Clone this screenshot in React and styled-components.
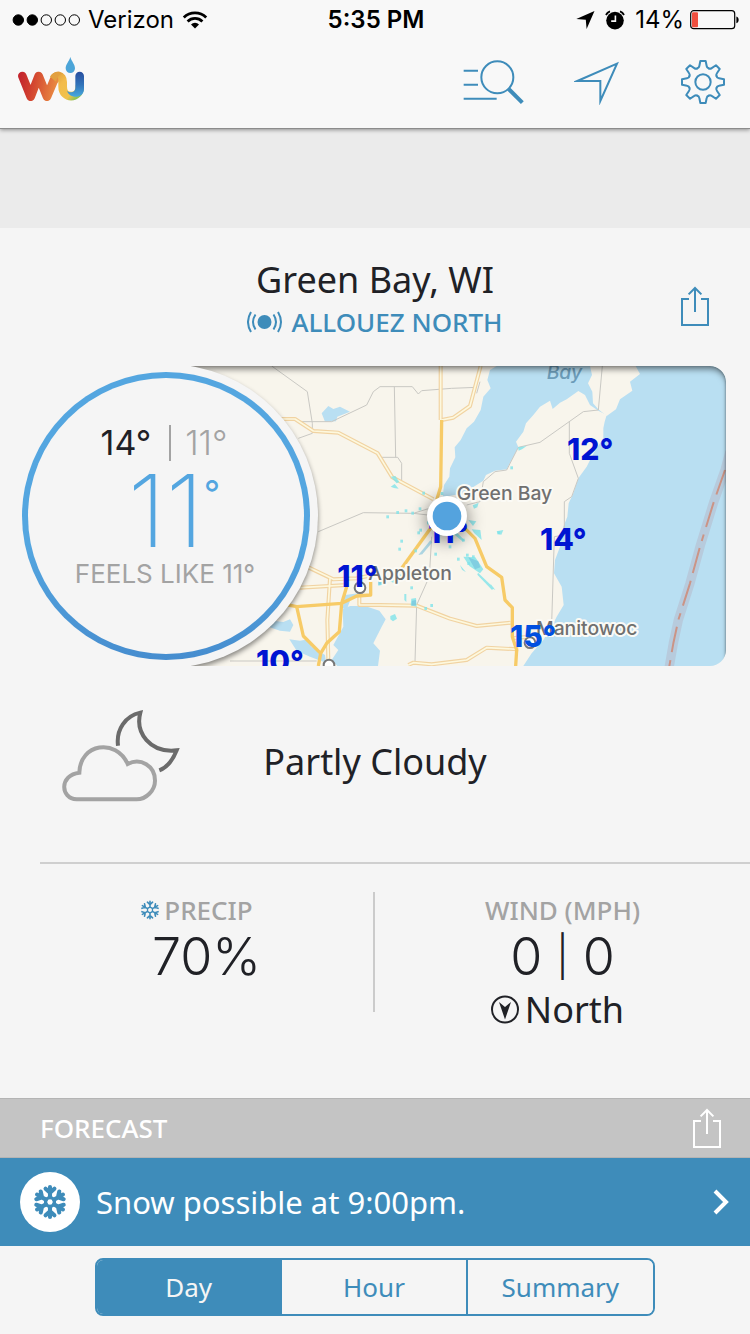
import React, { useState } from "react";
import styled, { createGlobalStyle } from "styled-components";

const GlobalStyle = createGlobalStyle`
  * {
    box-sizing: border-box;
  }
  body {
    margin: 0;
    background: #f5f5f5;
    color: #202126;
    font-family: "Noto Sans", "Open Sans", sans-serif;
  }
  h1, h2, p, dl, dt, dd {
    margin: 0;
    font-weight: 400;
  }
  button {
    margin: 0;
    padding: 0;
    border: 0;
    background: none;
    font: inherit;
    color: inherit;
    cursor: pointer;
  }
  svg {
    display: block;
  }
`;

const Header = styled.header`
  position: relative;
  background: #f8f8f8;
  border-bottom: 1px solid #8c8c8c;
  box-shadow: 0 1px 4px rgba(0, 0, 0, 0.4);
`;

const StatusBar = styled.div`
  display: grid;
  grid-template-columns: 1fr auto 1fr;
  align-items: center;
  height: 40px;
  padding: 0 10px 0 12px;
  font-family: Inter, sans-serif;
  font-size: 24px;
  line-height: 28px;
  color: #000000;
`;

const StatusGroup = styled.div`
  display: flex;
  align-items: center;
  justify-content: ${({ $end }) => ($end ? "flex-end" : "flex-start")};
  gap: ${({ $end }) => ($end ? "10px" : "8px")};
`;

const Battery = styled.div`
  display: flex;
  align-items: center;
  gap: 6px;
`;

const Clock = styled.time`
  font-weight: 600;
`;

const Toolbar = styled.div`
  display: flex;
  align-items: center;
  justify-content: space-between;
  height: 88px;
  padding: 0 24px 0 16px;
`;

const Actions = styled.nav`
  display: flex;
  align-items: center;
  gap: 50px;
  padding-bottom: 4px;
`;

const IconButton = styled.button`
  display: flex;
  color: ${({ $color }) => $color || "#3e8cba"};
`;

const Banner = styled.div`
  height: 99px;
  background: #ebebeb;
`;

const Place = styled.section`
  display: grid;
  grid-template-columns: 1fr auto 1fr;
  align-items: center;
  padding: 30px 40px 26px;
  text-align: center;
`;

const PlaceText = styled.div`
  grid-column: 2;
`;

const PlaceShare = styled.div`
  display: flex;
  justify-content: flex-end;
  padding-top: 14px;
`;

const City = styled.h1`
  font-size: 36px;
  line-height: 44px;
`;

const Station = styled.a`
  display: flex;
  align-items: center;
  justify-content: center;
  gap: 8px;
  margin-top: 2px;
  font-size: 26px;
  font-weight: 500;
  line-height: 36px;
  color: #3e8cba;
  text-decoration: none;
`;

const Current = styled.section`
  position: relative;
  padding: 0 24px 0 166px;
`;

const MapFrame = styled.div`
  position: relative;
  height: 300px;
  overflow: hidden;
  border-radius: 0 16px 16px 0;

  svg {
    width: 100%;
    height: 100%;
  }
`;

const MapShade = styled.div`
  position: absolute;
  inset: 0 0 -10px -20px;
  border-radius: 0 16px 16px 0;
  box-shadow: inset 0 5px 6px -2px rgba(0, 0, 0, 0.5),
    inset -1px 0 2px rgba(0, 0, 0, 0.2);
`;

const Halo = styled.div`
  position: absolute;
  top: -2px;
  left: -152px;
  width: 304px;
  height: 304px;
  border-radius: 50%;
  background: #f5f5f5;
  box-shadow: 0 3px 5px rgba(0, 0, 0, 0.45);
`;

const Dial = styled.div`
  position: absolute;
  top: 6px;
  left: 22px;
  display: flex;
  flex-direction: column;
  align-items: center;
  width: 288px;
  height: 288px;
  padding-top: 46px;
  border: 6px solid transparent;
  border-radius: 50%;
  background: linear-gradient(#f5f5f5, #f5f5f5) padding-box,
    linear-gradient(#54a6e0 60%, #468dcf) border-box;
  font-family: Inter, sans-serif;
  color: #a3a3a3;
`;

const Range = styled.div`
  display: flex;
  align-items: center;
  gap: 14px;
  padding-right: 4px;
  font-size: 34px;
  font-weight: 300;
  line-height: 38px;
`;

const High = styled.span`
  padding-right: 4px;
  font-weight: 400;
  color: #202126;
`;

const RangeRule = styled.span`
  width: 2px;
  height: 36px;
  background: #a3a3a3;
`;

const Temperature = styled.div`
  display: flex;
  padding-left: 16px;
  font-size: 100px;
  font-weight: 200;
  line-height: 98px;
  color: #54a6e0;
`;

const Degree = styled.span`
  font-size: 36px;
  font-weight: 400;
  line-height: 62px;
`;

const FeelsLike = styled.p`
  padding-right: 2px;
  font-size: 26px;
  line-height: 28px;
`;

const Conditions = styled.section`
  display: grid;
  grid-template-columns: 1fr auto 1fr;
  align-items: center;
  padding: 44px 62px 52px;
`;

const Summary = styled.p`
  padding-top: 4px;
  font-size: 36px;
  line-height: 44px;
`;

const Rule = styled.hr`
  height: 2px;
  margin: 0 0 0 40px;
  border: 0;
  background: #cfcfcf;
`;

const Stats = styled.dl`
  display: grid;
  grid-template-columns: 1fr 1fr;
  padding: 28px 0 66px;
`;

const Stat = styled.div`
  display: flex;
  flex-direction: column;
  align-items: center;
  align-self: start;
  min-height: 120px;
  padding-left: ${({ $ruled }) => ($ruled ? "40px" : "0")};
  border-right: ${({ $ruled }) => ($ruled ? "2px solid #cbcbcb" : "0")};

  svg {
    flex: none;
  }
`;

const StatLabel = styled.dt`
  display: flex;
  align-items: center;
  gap: 4px;
  padding-right: ${({ $icon }) => ($icon ? "20px" : "0")};
  font-size: 26px;
  font-weight: 500;
  line-height: 36px;
  color: #a3a3a3;

  svg {
    color: #3e8cba;
  }
`;

const StatValue = styled.dd`
  display: flex;
  align-items: center;
  gap: 14px;
  font-family: Inter, sans-serif;
  font-size: 52px;
  font-weight: 300;
  line-height: 58px;
`;

const Bar = styled.span`
  font-size: 40px;
`;

const Direction = styled.dd`
  display: flex;
  align-items: center;
  gap: 6px;
  margin-top: 2px;
  padding-right: 10px;
  font-size: 36px;
  line-height: 44px;
`;

const ForecastBar = styled.div`
  display: flex;
  align-items: center;
  justify-content: space-between;
  height: 60px;
  padding: 0 28px 0 40px;
  background: #c4c4c4;
  border: solid #b4b4b4;
  border-width: 1px 0;
  color: #ffffff;
`;

const ForecastTitle = styled.h2`
  font-size: 26px;
  font-weight: 500;
  line-height: 36px;
`;

const Alert = styled.button`
  display: flex;
  align-items: center;
  gap: 16px;
  width: 100%;
  height: 88px;
  padding: 0 20px;
  background: #3e8cba;
  color: #ffffff;
  font-size: 31px;
  line-height: 40px;
`;

const AlertBadge = styled.span`
  display: flex;
  align-items: center;
  justify-content: center;
  width: 60px;
  height: 60px;
  border-radius: 50%;
  background: #ffffff;
  color: #3e8cba;
`;

const AlertText = styled.span`
  flex: 1;
  text-align: left;
`;

const Tabs = styled.div`
  display: grid;
  grid-template-columns: repeat(3, 1fr);
  margin: 12px 95px 18px;
  border: 2px solid #3e8cba;
  border-radius: 8px;
  overflow: hidden;
`;

const Tab = styled.button`
  height: 54px;
  font-size: 26px;
  line-height: 36px;
  background: ${({ $active }) => ($active ? "#3e8cba" : "#f5f5f5")};
  color: ${({ $active }) => ($active ? "#f5f5f5" : "#3e8cba")};

  &:not(:last-child) {
    border-right: 2px solid #3e8cba;
  }
`;

const SignalIcon = () => (
  <svg width="68" height="12" viewBox="0 0 68 12" stroke="#000">
    <circle cx="6.3" cy="6" r="5.2" />
    <circle cx="20.3" cy="6" r="5.2" />
    <circle cx="34.3" cy="6" r="5.2" fill="none" />
    <circle cx="48.3" cy="6" r="5.2" fill="none" />
    <circle cx="62.3" cy="6" r="5.2" fill="none" />
  </svg>
);

const WifiIcon = () => (
  <svg width="26" height="20" viewBox="0 0 26 20" fill="none" stroke="#000" strokeWidth="2.8">
    <path d="M1.8 7.4a16 16 0 0 1 22.4 0" />
    <path d="M5.6 11.4a10.5 10.5 0 0 1 14.8 0" />
    <path d="M13 18.6l-4-4.2a5.8 5.8 0 0 1 8 0z" fill="#000" stroke="none" />
  </svg>
);

const LocationIcon = () => (
  <svg width="19" height="18" viewBox="0 0 19 18">
    <path d="M18.5 0L10.6 18 9.8 8.8 0.3 8z" />
  </svg>
);

const AlarmIcon = () => (
  <svg width="20" height="20" viewBox="0 0 20 20" fill="none">
    <circle cx="10" cy="10.6" r="8.8" fill="#000" />
    <path d="M10.4 5.5v5.6H6.2" stroke="#f8f8f8" strokeWidth="1.6" />
    <path d="M1 5A7 7 0 0 1 5 1.4M19 5a7 7 0 0 0-4-3.6" stroke="#000" strokeWidth="1.8" />
  </svg>
);

const BatteryIcon = () => (
  <svg width="50" height="20" viewBox="0 0 50 20">
    <rect x="0.7" y="0.7" width="44" height="18" rx="3" fill="none" stroke="#000" strokeWidth="1.2" />
    <rect x="2" y="2.2" width="6" height="15" rx="1" fill="#ef4f3f" />
    <path d="M46.4 6.4c3 .6 3 6 0 6.8z" />
  </svg>
);

const Logo = () => (
  <svg width="70" height="56" viewBox="48 168 210 168" fill="none" strokeLinecap="round" strokeLinejoin="round" role="img" aria-label="Weather Underground">
    <defs>
      <linearGradient id="warm" gradientUnits="userSpaceOnUse" x1="60" y1="240" x2="175" y2="260">
        <stop offset="0" stopColor="#c4262e" />
        <stop offset="0.3" stopColor="#d1402f" />
        <stop offset="1" stopColor="#eb8f43" />
      </linearGradient>
      <linearGradient id="sun" gradientUnits="userSpaceOnUse" x1="160" y1="220" x2="240" y2="300">
        <stop offset="0" stopColor="#dd9a3b" />
        <stop offset="0.35" stopColor="#f3bc4b" />
        <stop offset="0.72" stopColor="#f0c24c" />
        <stop offset="0.9" stopColor="#8fc253" />
      </linearGradient>
      <linearGradient id="rain" gradientUnits="userSpaceOnUse" x1="0" y1="216" x2="0" y2="292">
        <stop offset="0" stopColor="#284f9f" />
        <stop offset="0.5" stopColor="#3274ba" />
        <stop offset="1" stopColor="#49abdf" />
      </linearGradient>
    </defs>
    <path d="M163 240C166 222 188 224 188 246v14c0 38 51 38 51 0" stroke="url(#sun)" strokeWidth="26" />
    <path d="M67 228l25 62 24-62 25 62 21-50" stroke="url(#warm)" strokeWidth="26" />
    <path d="M150 230c6-14 26-18 38-9-14 2-16 14-20 24z" fill="#e2a03f" />
    <path d="M226 228a13 13 0 0 1 26 0v38c0 14-9 23-22 24-14 0-25-5-29-18 10 9 25 5 25-8z" fill="url(#rain)" />
    <path d="M211 171c4 14 14 22 14 34a14 14 0 0 1-28 0c0-12 10-20 14-34z" fill="#4ca5d8" />
  </svg>
);

const SearchListIcon = () => (
  <svg width="62" height="46" viewBox="262 177 186 138" fill="none" stroke="currentColor" strokeWidth="6">
    <circle cx="368" cy="232" r="48" />
    <path d="M267 212h43M267 254h43M267 296h99" />
    <path d="M402 267l41 41" strokeWidth="12" />
  </svg>
);

const NavigateIcon = () => (
  <svg width="56" height="46" viewBox="596 178 168 138" fill="none" stroke="currentColor" strokeWidth="6">
    <path d="M725 192L606 244h69v60z" strokeMiterlimit="8" />
  </svg>
);

const GearIcon = () => (
  <svg width="46" height="46" viewBox="-69 -69 138 138" fill="none" stroke="currentColor" strokeWidth="6" strokeLinejoin="round" strokeLinecap="round">
    <circle r="23" />
    {[0, 45, 90, 135, 180, 225, 270, 315].map((angle) => (
      <path key={angle} d="M-17 -41Q-12 -42 -11 -48L-8 -63H8L11 -48Q12 -42 17 -41" transform={`rotate(${angle})`} />
    ))}
  </svg>
);

const ShareIcon = () => (
  <svg width="30" height="40" viewBox="0 0 30 40" fill="none" stroke="currentColor" strokeWidth="2">
    <path d="M9 13H2v26h26V13h-7" />
    <path d="M15 26V2M8.6 8.4L15 2l6.4 6.4" />
  </svg>
);

const BroadcastIcon = () => (
  <svg width="36" height="22" viewBox="0 0 36 22" fill="none" stroke="currentColor" strokeWidth="2">
    <circle cx="17.5" cy="11" r="7" fill="currentColor" stroke="none" />
    <path d="M8.5 3.500q-5 7.500 0 15M4 1q-6 10 0 20M26.500 3.500q5 7.500 0 15M31 1q6 10 0 20" />
  </svg>
);

const Snowflake = ({ size, weight }) => (
  <svg width={size} height={size} viewBox="-50 -50 100 100" fill="none" stroke="currentColor" strokeWidth={weight} strokeLinecap="round">
    {[0, 60, 120, 180, 240, 300].map((angle) => (
      <path key={angle} d="M0 -14V-44M-13 -39L0 -27L13 -39" transform={`rotate(${angle})`} />
    ))}
    <circle r="13" strokeWidth={weight - 2} />
  </svg>
);

const CloudMoonIcon = () => (
  <svg width="120" height="100" viewBox="66 60 360 300" fill="none" strokeWidth="12">
    <path d="M234 167C228 118 256 78 301 68C285 128 330 190 410 181C398 212 382 232 358 241" stroke="#6b6b6b" />
    <path d="M110 328C60 326 58 254 118 248C120 160 228 144 263 222C302 202 345 228 345 272C345 302 318 328 290 328Z" stroke="#a3a3a3" />
  </svg>
);

const CompassIcon = () => (
  <svg width="28" height="30" viewBox="0 0 28 30">
    <circle cx="14" cy="14.5" r="13" fill="none" stroke="currentColor" strokeWidth="2" />
    <path d="M14 24.500L8 7l6 5 6-5z" fill="currentColor" />
  </svg>
);

const ChevronIcon = () => (
  <svg width="18" height="28" viewBox="0 0 18 28" fill="none" stroke="currentColor" strokeWidth="4">
    <path d="M3 3l11 11L3 25" />
  </svg>
);

const minorRoads = [
  "M65 18L172 95L187 190V220L145 235",
  "M155 185H245L350 135L370 95L390 80H487L505 102L515 92L605 85L680 82",
  "M433 80L437 292M395 292H443L455 310V365",
  "M205 515L340 458L490 460L545 443M490 460L560 468",
  "M545 530L538 650L500 735L495 905",
  "M650 435L690 425L700 365L735 335L770 330L805 262L870 247L1000 155L1045 150L1057 18",
  "M958 185V280L985 355L965 410L943 425V525L913 530L905 790",
  "M-60 903H200M680 100L690 65",
];

const roads = [
  "M60 177H135L190 213L265 218L383 280L427 352L550 418",
  "M572 18V180M692 18L660 138L610 173L575 180",
  "M150 610L250 658L320 655L355 648M150 683L290 675",
  "M240 655L232 780L235 900",
  "M328 710V735H390L500 737L600 776L680 798L782 788",
  "M475 915L490 908L545 913L650 900L710 863L805 868M785 835L840 830",
];

const highways = [
  "M575 180L572 380L560 420",
  "M545 500L455 625",
  "M645 505L675 535L710 620L755 652L765 720L787 743V830L800 870L797 918",
  "M100 732L140 740L275 730L320 708L362 705V665",
  "M140 740L160 828L212 880L230 850L268 815L275 730L290 680M212 880L205 918",
];

const temperatures = [
  { x: 262, y: 681, value: 11 },
  { x: 18, y: 936, value: 10 },
  { x: 534, y: 549, value: 11 },
  { x: 951, y: 300, value: 12 },
  { x: 870, y: 570, value: 14 },
  { x: 780, y: 861, value: 15, fill: "#004fe0" },
];

const specks = [
  [413, 470], [443, 457], [468, 452], [488, 459], [510, 446], [521, 399], [535, 488], [512, 510], [506, 518],
  [455, 543], [449, 567], [497, 572], [557, 582], [576, 400], [625, 597], [640, 475], [652, 585], [670, 590],
  [485, 683], [527, 745], [545, 736], [746, 518], [785, 323], [656, 610], [600, 560], [640, 540],
];

const MapLabel = styled.text`
  font-family: Inter, sans-serif;
  font-size: 58px;
  font-weight: 500;
  fill: #707070;
  stroke: #fbfaf5;
  stroke-width: 12px;
  stroke-linejoin: round;
  paint-order: stroke;
`;

const WaterLabel = styled(MapLabel)`
  font-style: italic;
  fill: #6c9cb8;
  stroke: none;
`;

const MapTemp = styled.text`
  font-family: Inter, sans-serif;
  font-size: 90px;
  font-weight: 800;
`;

const RadarMap = () => (
  <svg viewBox="-252 18 1680 900" preserveAspectRatio="xMinYMid slice" fill="none" strokeLinejoin="round">
    <defs>
      <filter id="glow" x="-50%" y="-50%" width="200%" height="200%">
        <feGaussianBlur stdDeviation="24" />
      </filter>
    </defs>
    <rect x="-252" y="18" width="2400" height="900" fill="#f8f5ec" />
    <g fill="#b9dff2">
      <path d="M740 18L720 30L712 60L722 85L700 110L692 150L672 185L650 205L632 240L614 262L616 292L600 325L598 350L582 375L578 412L640 400L700 362L708 345L735 332L770 328L790 290L805 262L798 245L820 215L828 190L850 165L870 140L900 122L908 147L930 128L950 118L985 93L1005 105L1020 135L1045 152L1070 165L1064 185L1060 205L1060 235L1042 262L1025 290L1010 320L985 355L970 400L956 430L952 470L940 500L930 560L915 600L912 640L935 680L941 735L920 770L905 800L880 840L845 880L820 918H2148V18Z" />
      <path d="M278 748L300 738L345 738L388 752L407 778L395 800L370 850L390 872L384 918H262L245 900L265 870L250 855L280 800Z" />
      <path d="M215 160L235 138L250 147L270 140L300 155L262 170L258 184L225 185Z" />
      <path d="M55 800L70 782L100 786L120 778L130 795L120 815L90 812ZM118 838L150 842L175 838L185 860L225 885L228 908L180 890L140 872Z" />
      <path d="M285 705L325 700L300 722L290 750L278 745Z" />
    </g>
    <path d="M1020 18H1157L1170 42L1140 65L1147 92L1110 118L1098 148L1070 168L1045 148L1029 130L1027 95L1014 70L1026 45Z" fill="#f8f5ec" />
    <g stroke="#c9c8c3" strokeWidth="3">
      {minorRoads.map((d) => (
        <path key={d} d={d} />
      ))}
    </g>
    <g stroke="#f1d3a2" strokeWidth="12">
      {roads.map((d) => (
        <path key={d} d={d} />
      ))}
    </g>
    <g stroke="#fdf8de" strokeWidth="5">
      {roads.map((d) => (
        <path key={d} d={d} />
      ))}
    </g>
    <g stroke="#f7cb67" strokeWidth="10">
      {highways.map((d) => (
        <path key={d} d={d} />
      ))}
    </g>
    <path d="M1440 275L1425 330L1390 430L1350 560L1320 670L1285 780L1270 850L1256 930" stroke="#b7cbdd" strokeWidth="28" />
    <path d="M1425 330L1390 430L1350 560L1320 670L1285 780L1270 850L1256 930" stroke="#cb9486" strokeWidth="6" strokeDasharray="78 24 78 24 20 22" />
    <g fill="#7fe3ea" fillOpacity="0.8">
      {specks.map(([x, y]) => (
        <rect key={`${x}-${y}`} x={x - 4} y={y - 4} width="8" height="9" />
      ))}
      <path d="M422 350l14-2 12 18-8 4zM422 380l12-8 12 14-14-2zM421 768l14-6 6 14-12 8-8-6zM484 716l14-2 2 26-18-4zM463 702h6v24l-6-6z" />
      <path d="M668 436l18-8-4 14-10 4zM665 508l26 2 4 30-22-20zM655 480l24 4-10 14zM615 512l30 30-8 2-26-22zM640 590l36 2 24 36-10 12-32-22zM684 638l48 46-6 6-44-46zM630 615l18 22-12-8zM804 262l26-4-14 10-10 4zM740 514l20-4-6 14-10-2zM722 672l14 18-12-6z" />
      <path d="M385 655l20-12 14 10-10 18-24 6zM410 660l30-18 20 2-30 24z" />
    </g>
    <g fill="#6fb9d8" fillOpacity="0.55">
      <path d="M655 592l30 12 6 18-16 6zM505 585l36-44 6 6-30 36zM385 655l22-6-8 22-14 4zM486 722l12-2v16l-14 2z" />
    </g>
    <g stroke="#777" strokeWidth="6" fill="#fff">
      <circle cx="330" cy="683" r="16" />
      <circle cx="237" cy="915" r="16" />
      <circle cx="840" cy="848" r="16" />
    </g>
    <circle cx="591" cy="480" r="66" fill="#000" fillOpacity="0.42" filter="url(#glow)" />
    <MapLabel x="355" y="661">Appleton</MapLabel>
    <MapLabel x="858" y="826">Manitowoc</MapLabel>
    <MapLabel x="620" y="419">Green Bay</MapLabel>
    <WaterLabel x="890" y="56">Bay</WaterLabel>
    {temperatures.map(({ x, y, value, fill }) => (
      <MapTemp key={`${x}-${y}`} x={x} y={y} fill={fill || "#0014d2"}>
        {value}°
      </MapTemp>
    ))}
    <circle cx="591" cy="468" r="60" fill="#fff" />
    <circle cx="591" cy="468" r="43" fill="#54a3de" />
  </svg>
);

const tabNames = ["Day", "Hour", "Summary"];

const App = () => {
  const [active, setActive] = useState("Day");

  return (
    <>
      <GlobalStyle />
      <Header>
        <StatusBar>
          <StatusGroup>
            <SignalIcon />
            <span>Verizon</span>
            <WifiIcon />
          </StatusGroup>
          <Clock>5:35 PM</Clock>
          <StatusGroup $end>
            <LocationIcon />
            <AlarmIcon />
            <Battery>
              14%
              <BatteryIcon />
            </Battery>
          </StatusGroup>
        </StatusBar>
        <Toolbar>
          <Logo />
          <Actions>
            <IconButton aria-label="Search">
              <SearchListIcon />
            </IconButton>
            <IconButton aria-label="Current location">
              <NavigateIcon />
            </IconButton>
            <IconButton aria-label="Settings">
              <GearIcon />
            </IconButton>
          </Actions>
        </Toolbar>
      </Header>
      <Banner />
      <main>
        <Place>
          <PlaceText>
            <City>Green Bay, WI</City>
            <Station href="#station">
              <BroadcastIcon />
              ALLOUEZ NORTH
            </Station>
          </PlaceText>
          <PlaceShare>
            <IconButton aria-label="Share conditions">
              <ShareIcon />
            </IconButton>
          </PlaceShare>
        </Place>
        <Current>
          <MapFrame>
            <RadarMap />
            <MapShade />
            <Halo />
          </MapFrame>
          <Dial>
            <Range>
              <High>14°</High>
              <RangeRule />
              <span>11°</span>
            </Range>
            <Temperature>
              11<Degree>°</Degree>
            </Temperature>
            <FeelsLike>FEELS LIKE 11°</FeelsLike>
          </Dial>
        </Current>
        <Conditions>
          <CloudMoonIcon />
          <Summary>Partly Cloudy</Summary>
        </Conditions>
        <Rule />
        <Stats>
          <Stat $ruled>
            <StatLabel $icon>
              <Snowflake size={20} weight={8} />
              PRECIP
            </StatLabel>
            <StatValue>70%</StatValue>
          </Stat>
          <Stat>
            <StatLabel>WIND (MPH)</StatLabel>
            <StatValue>
              <span>0</span>
              <Bar>|</Bar>
              <span>0</span>
            </StatValue>
            <Direction>
              <CompassIcon />
              North
            </Direction>
          </Stat>
        </Stats>
        <ForecastBar>
          <ForecastTitle>FORECAST</ForecastTitle>
          <IconButton $color="#ffffff" aria-label="Share forecast">
            <ShareIcon />
          </IconButton>
        </ForecastBar>
        <Alert>
          <AlertBadge>
            <Snowflake size={34} weight={12} />
          </AlertBadge>
          <AlertText>Snow possible at 9:00pm.</AlertText>
          <ChevronIcon />
        </Alert>
        <Tabs>
          {tabNames.map((name) => (
            <Tab key={name} $active={name === active} onClick={() => setActive(name)}>
              {name}
            </Tab>
          ))}
        </Tabs>
      </main>
    </>
  );
};

export default App;
